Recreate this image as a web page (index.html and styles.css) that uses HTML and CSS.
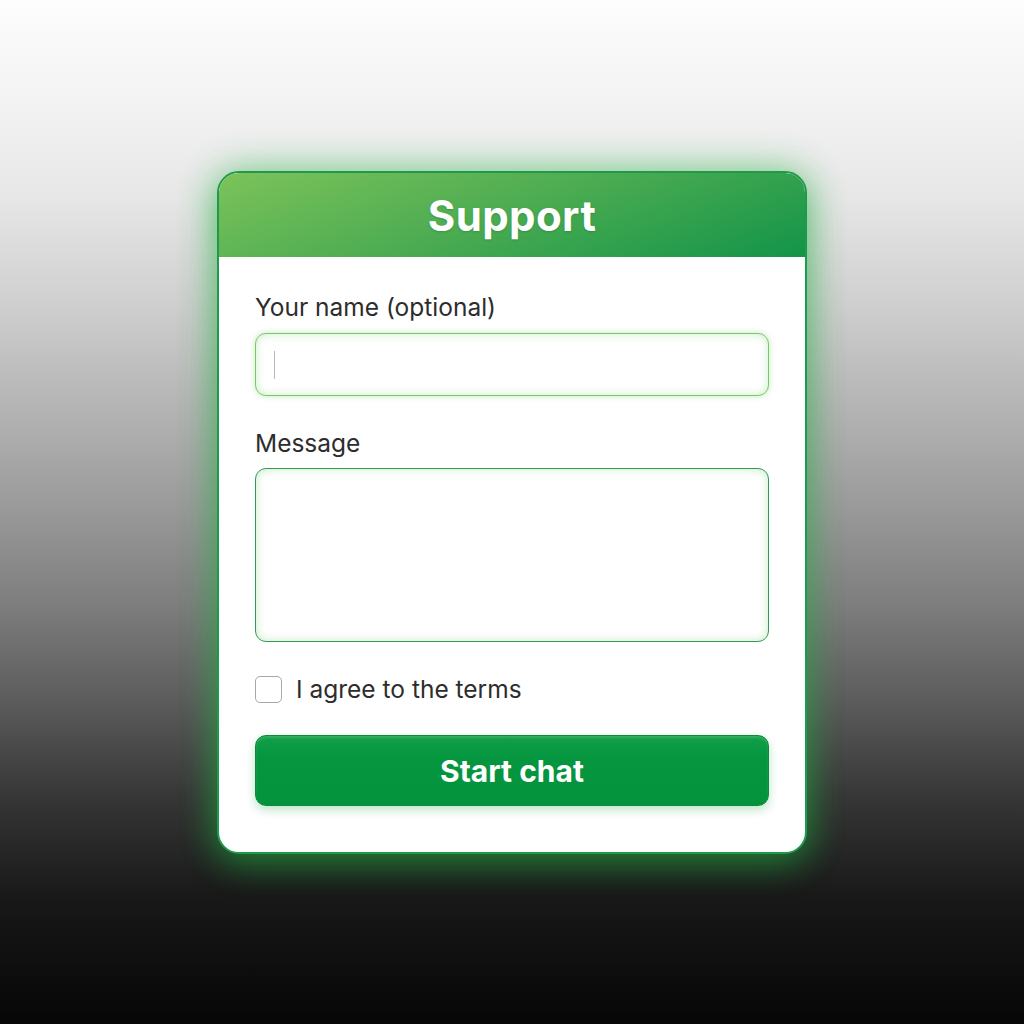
FILE: index.html
```html
<!DOCTYPE html>
<html lang="en">
<head>
<meta charset="utf-8">
<title>Support</title>
<link rel="stylesheet" href="styles.css">
</head>
<body>
<main class="page">
  <section class="card">
    <header class="card-header">
      <h1 class="title">Support</h1>
    </header>
    <form class="card-body">
      <label class="label" for="name">Your name (optional)</label>
      <div class="input"><span class="caret"></span></div>
      <label class="label label-msg" for="msg">Message</label>
      <div class="textarea"></div>
      <div class="check-row">
        <span class="checkbox"></span>
        <span class="check-text">I agree to the terms</span>
      </div>
      <div class="button">Start chat</div>
    </form>
  </section>
</main>
</body>
</html>
```

FILE: styles.css
```css
html, body {
  margin: 0;
  padding: 0;
}
body {
  width: 1024px;
  height: 1024px;
  overflow: hidden;
  font-family: Inter, "Noto Sans", "Liberation Sans", sans-serif;
  background: linear-gradient(to bottom,
    #fdfdfd 0px,
    #f3f3f3 100px,
    #e6e6e6 200px,
    #d0d0d0 300px,
    #b6b6b6 400px,
    #9c9c9c 500px,
    #7f7f7f 600px,
    #5c5c5c 700px,
    #353535 800px,
    #181818 900px,
    #060606 1024px);
}
.page {
  display: flex;
  justify-content: center;
  padding-top: 171px;
}
.card {
  width: 586px;
  border: 2px solid #1f9a4c;
  border-radius: 22px;
  background: #ffffff;
  overflow: hidden;
  box-shadow: 0 0 40px rgba(40, 190, 70, 0.45), 0 10px 34px rgba(20, 160, 50, 0.45);
}
.card-header {
  height: 84px;
  display: flex;
  align-items: center;
  justify-content: center;
  background: linear-gradient(160deg, #7cc35a 0%, #4fad52 45%, #139449 100%);
}
.title {
  margin: 0;
  color: #ffffff;
  font-size: 42px;
  font-weight: 700;
  letter-spacing: 0.4px;
  text-shadow: 0 1px 2px rgba(0, 80, 20, 0.25);
}
.card-body {
  display: flex;
  flex-direction: column;
  padding: 36px 36px 46px 36px;
  margin: 0;
}
.label {
  font-size: 24.5px;
  line-height: 28px;
  color: #2d2d2d;
}
.label-msg {
  margin-top: 33px;
}
.input {
  margin-top: 12px;
  height: 61px;
  border: 1.5px solid #7fc46c;
  border-radius: 11px;
  background: #ffffff;
  box-shadow: inset 0 0 10px rgba(110, 210, 100, 0.35), 0 0 6px rgba(110, 210, 100, 0.45);
  display: flex;
  align-items: center;
  padding-left: 18px;
}
.caret {
  width: 1px;
  height: 28px;
  background: #b8b8b8;
}
.textarea {
  margin-top: 11px;
  height: 172px;
  border: 1.5px solid #33995a;
  border-radius: 11px;
  background: #ffffff;
  box-shadow: inset 0 0 10px rgba(110, 210, 100, 0.4);
}
.check-row {
  margin-top: 33px;
  display: flex;
  align-items: center;
  gap: 14px;
  height: 28px;
}
.checkbox {
  width: 25px;
  height: 25px;
  border: 1.5px solid #a8a8a8;
  border-radius: 5px;
  background: #ffffff;
}
.check-text {
  font-size: 24.5px;
  color: #2d2d2d;
  line-height: 28px;
}
.button {
  margin-top: 32px;
  height: 69px;
  border: 1px solid #0b8a3a;
  border-radius: 11px;
  background: linear-gradient(to bottom, #12a048 0%, #05963f 30%, #03933d 100%);
  color: #ffffff;
  font-size: 30px;
  font-weight: 700;
  display: flex;
  align-items: center;
  justify-content: center;
  box-shadow: 0 4px 10px rgba(30, 170, 70, 0.3), inset 0 2px 2px rgba(255, 255, 255, 0.15);
}
```
